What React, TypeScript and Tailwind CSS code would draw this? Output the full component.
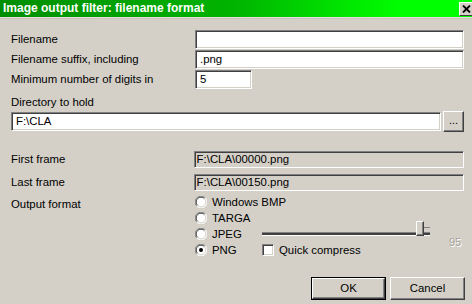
import React from "react";

const sunken =
  "border border-t-[#808080] border-l-[#808080] border-b-white border-r-white shadow-[inset_1px_1px_0_#404040,inset_-1px_-1px_0_#d4d0c8]";

const raised =
  "bg-[#d4d0c8] border border-t-white border-l-white border-b-[#404040] border-r-[#404040] shadow-[inset_-1px_-1px_0_#808080]";

function Radio({ checked }: { checked?: boolean }) {
  return (
    <svg width="12" height="12" viewBox="0 0 12 12" className="shrink-0">
      <circle cx="6" cy="6" r="5.5" fill="#ffffff" />
      <path d="M10.2 1.8A5.6 5.6 0 0 0 1.8 10.2" fill="none" stroke="#808080" strokeWidth="1" />
      <path d="M9.4 2.6A4.6 4.6 0 0 0 2.6 9.4" fill="none" stroke="#404040" strokeWidth="1" />
      <path d="M1.8 10.2A5.6 5.6 0 0 0 10.2 1.8" fill="none" stroke="#ffffff" strokeWidth="1" />
      <path d="M2.6 9.4A4.6 4.6 0 0 0 9.4 2.6" fill="none" stroke="#d4d0c8" strokeWidth="1" />
      {checked && <circle cx="6" cy="6" r="2" fill="#000" />}
    </svg>
  );
}

function Label({ children, className = "" }: { children: React.ReactNode; className?: string }) {
  return <div className={"text-[11.4px] leading-[13px] text-black whitespace-nowrap " + className}>{children}</div>;
}

export default function App() {
  return (
    <div
      className="w-[472px] h-[304px] bg-[#d4d0c8] overflow-hidden relative"
      style={{ fontFamily: '"Liberation Sans", Arial, sans-serif' }}
    >
      {/* Title bar */}
      <div className="h-[17px] flex items-center justify-between bg-[linear-gradient(to_right,#008e00,#00b400_50%,#00ff00_85%)]">
        <div className="pl-[3px] text-white font-bold text-[12px] leading-[14px] -mt-[1px]">
          Image output filter: filename format
        </div>
        <div className="mr-[-2px] mt-[1px] w-[15px] h-[14px] bg-[#d4d0c8] border border-t-white border-l-white border-b-[#404040] border-r-[#404040] flex items-center justify-center">
          <svg width="9" height="8" viewBox="0 0 9 8">
            <path d="M1 0.5L8 7.5M8 0.5L1 7.5" stroke="#000" strokeWidth="1.8" />
          </svg>
        </div>
      </div>
      <div className="h-[1px] bg-[#e8dcdc]" />
      <div className="h-[1px] bg-[#c8c4bc]" />

      <div className="pl-[11px] pr-[8px]">
        {/* Filename */}
        <div className="mt-[11px] flex items-center h-[19px]">
          <Label className="w-[184px]">Filename</Label>
          <div className={"w-[269px] h-[19px] bg-white " + sunken} />
        </div>
        <div className="mt-[1px] flex items-center h-[19px]">
          <Label className="w-[184px]">Filename suffix, including</Label>
          <div className={"w-[269px] h-[19px] bg-white flex items-center pl-[4px] " + sunken}>
            <Label>.png</Label>
          </div>
        </div>
        <div className="mt-[1px] flex items-center h-[19px]">
          <Label className="w-[184px]">Minimum number of digits in</Label>
          <div className={"w-[57px] h-[19px] bg-white flex items-center pl-[4px] " + sunken}>
            <Label>5</Label>
          </div>
        </div>

        {/* Directory */}
        <Label className="mt-[7px]">Directory to hold</Label>
        <div className="mt-[3px] flex items-start">
          <div className={"w-[430px] h-[19px] bg-white flex items-center pl-[4px] " + sunken}>
            <Label>F:\CLA</Label>
          </div>
          <div className={"ml-[2px] -mt-[1px] w-[21px] h-[21px] flex items-center justify-center " + raised}>
            <span className="text-[11px] leading-[11px] text-black -mt-[2px]">...</span>
          </div>
        </div>

        {/* Frames */}
        <div className="mt-[19px] flex items-center h-[17px]">
          <Label className="w-[183px]">First frame</Label>
          <div className={"w-[271px] h-[17px] bg-[#d4d0c8] flex items-center pl-[2px] " + sunken}>
            <Label>F:\CLA\00000.png</Label>
          </div>
        </div>
        <div className="mt-[6px] flex items-center h-[17px]">
          <Label className="w-[183px]">Last frame</Label>
          <div className={"w-[271px] h-[17px] bg-[#d4d0c8] flex items-center pl-[2px] " + sunken}>
            <Label>F:\CLA\00150.png</Label>
          </div>
        </div>

        {/* Output format */}
        <div className="mt-[3px] flex items-start">
          <Label className="w-[184px] mt-[4px]">Output format</Label>
          <div className="flex flex-col">
            <div className="flex items-center h-[16px]">
              <Radio />
              <Label className="ml-[5px]">Windows BMP</Label>
            </div>
            <div className="flex items-center h-[16px]">
              <Radio />
              <Label className="ml-[5px]">TARGA</Label>
            </div>
            <div className="flex items-center h-[16px]">
              <Radio />
              <Label className="ml-[5px] w-[50px]">JPEG</Label>
              {/* slider */}
              <div className="relative w-[168px] h-[16px] flex items-center">
                <div className="w-full h-[4px] border-t border-t-[#808080] border-b border-b-white bg-[#404040]" />
                <div className={"absolute left-[154px] top-[-5px] w-[8px] h-[15px] " + raised} />
                <div className="absolute left-[162px] top-[1px] w-[6px] h-[1px] bg-[#808080]" />
              </div>
              <div className="ml-[19px] mt-[16px] text-[11px] leading-[13px] text-[#a8a49c] [text-shadow:1px_1px_0_#ffffff]">95</div>
            </div>
            <div className="flex items-center h-[16px]">
              <Radio checked />
              <Label className="ml-[5px] w-[50px]">PNG</Label>
              <div className={"w-[12px] h-[12px] bg-white " + sunken} />
              <Label className="ml-[5px]">Quick compress</Label>
            </div>
          </div>
        </div>

        {/* Buttons */}
        <div className="mt-[19px] flex justify-end mr-[-1px]">
          <div className="w-[75px] h-[23px] border border-black flex">
            <div className={"flex-1 flex items-center justify-center " + raised}>
              <Label>OK</Label>
            </div>
          </div>
          <div className={"ml-[4px] w-[75px] h-[23px] flex items-center justify-center " + raised}>
            <Label>Cancel</Label>
          </div>
        </div>
      </div>
    </div>
  );
}
